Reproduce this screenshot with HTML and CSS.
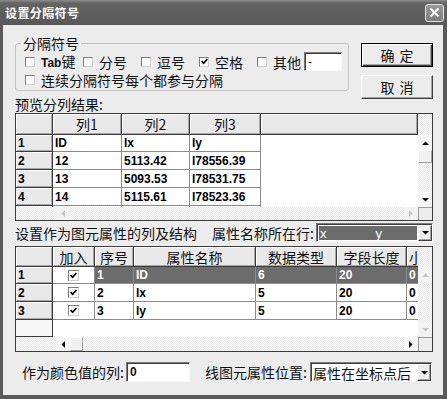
FILE: index.html
```html
<!DOCTYPE html>
<html>
<head>
<meta charset="utf-8">
<title>设置分隔符号</title>
<link rel="stylesheet" href="styles.css">
</head>
<body>
<div class="win">
  <div class="titlebar">
    <span class="title">设置分隔符号</span>
    <span class="close"><svg width="11" height="11" viewBox="0 0 11 11"><path d="M1.5 1.5L9.5 9.5M9.5 1.5L1.5 9.5" stroke="#fff" stroke-width="2"/></svg></span>
  </div>
  <div class="body">
    <div class="top">
      <div class="group">
        <span class="legend">分隔符号</span>
        <div class="grow r1">
          <span class="opt"><span class="cb"></span><span><b class="lat">Tab</b>键</span></span>
          <span class="opt"><span class="cb"></span><span>分号</span></span>
          <span class="opt"><span class="cb"></span><span>逗号</span></span>
          <span class="opt"><span class="cb"><svg class="tick" width="7" height="7" viewBox="0 0 7 7"><path d="M0.6 3.2l2 2 3.8-4.2" fill="none" stroke="#000" stroke-width="1.7"/></svg></span><span>空格</span></span>
          <span class="opt short"><span class="cb"></span><span>其他</span></span>
          <span class="field other">-</span>
        </div>
        <div class="grow r2">
          <span class="opt wide"><span class="cb"></span><span>连续分隔符号每个都参与分隔</span></span>
        </div>
      </div>
      <div class="btns">
        <div class="btn def"><span>确</span><span>定</span></div>
        <div class="btn"><span>取</span><span>消</span></div>
      </div>
      <div class="lbl">预览分列结果:</div>
    </div>

    <div class="grid g1">
      <div class="gtop">
        <div class="gview">
          <div class="gr gh">
            <div class="c rh"></div><div class="c hc">列1</div><div class="c hc">列2</div><div class="c hc">列3</div><div class="c hc"></div>
          </div>
          <div class="gr">
            <div class="c rh">1</div><div class="c d">ID</div><div class="c d">lx</div><div class="c d">ly</div><div class="c blank"></div>
          </div>
          <div class="gr">
            <div class="c rh">2</div><div class="c d">12</div><div class="c d">5113.42</div><div class="c d">l78556.39</div><div class="c blank"></div>
          </div>
          <div class="gr">
            <div class="c rh">3</div><div class="c d">13</div><div class="c d">5093.53</div><div class="c d">l78531.75</div><div class="c blank"></div>
          </div>
          <div class="gr">
            <div class="c rh">4</div><div class="c d">14</div><div class="c d">5115.61</div><div class="c d">l78523.36</div><div class="c blank"></div>
          </div>
          <div class="gr">
            <div class="c rh"></div><div class="c d"></div><div class="c d"></div><div class="c d"></div><div class="c blank"></div>
          </div>
        </div>
        <div class="vs">
          <div class="vs-head"></div>
          <div class="sb"><svg width="7" height="4" viewBox="0 0 7 4"><path d="M0 4h7L3.5 0.5z"/></svg></div>
          <div class="thumb v"></div>
          <div class="track"></div>
          <div class="sb"><svg width="7" height="4" viewBox="0 0 7 4"><path d="M0 0h7L3.5 3.5z"/></svg></div>
        </div>
      </div>
      <div class="gbot">
        <div class="hs">
          <div class="sb h dis"><svg width="4" height="7" viewBox="0 0 4 7"><path d="M4 0v7L0.5 3.5z"/></svg></div>
          <div class="track"></div>
          <div class="sb h dis"><svg width="4" height="7" viewBox="0 0 4 7"><path d="M0 0v7L3.5 3.5z"/></svg></div>
        </div>
        <div class="corner"></div>
      </div>
    </div>

    <div class="row2">
      <span class="txt">设置作为图元属性的列及结构</span>
      <span class="attr">
        <span class="txt">属性名称所在行:</span>
        <span class="combo c1">
          <span class="sel"><span>x</span><span class="ylab">y</span></span>
          <span class="dd"><svg width="7" height="4" viewBox="0 0 7 4"><path d="M0 0h7L3.5 3.5z"/></svg></span>
        </span>
      </span>
    </div>

    <div class="grid g2">
      <div class="gtop">
        <div class="gview">
          <div class="gr gh">
            <div class="c rh"></div><div class="c hc">加入</div><div class="c hc">序号</div><div class="c hc">属性名称</div><div class="c hc">数据类型</div><div class="c hc">字段长度</div><div class="c hc part">小数位数</div>
          </div>
          <div class="gr selrow">
            <div class="c rh">1</div><div class="c d ck"><span class="cb"><svg width="7" height="7" viewBox="0 0 7 7"><path d="M0.6 3.2l2 2 3.8-4.2" fill="none" stroke="#000" stroke-width="1.7"/></svg></span></div><div class="c d">1</div><div class="c d">ID</div><div class="c d">6</div><div class="c d">20</div><div class="c d">0</div>
          </div>
          <div class="gr">
            <div class="c rh">2</div><div class="c d ck"><span class="cb"><svg width="7" height="7" viewBox="0 0 7 7"><path d="M0.6 3.2l2 2 3.8-4.2" fill="none" stroke="#000" stroke-width="1.7"/></svg></span></div><div class="c d">2</div><div class="c d">lx</div><div class="c d">5</div><div class="c d">20</div><div class="c d">0</div>
          </div>
          <div class="gr">
            <div class="c rh">3</div><div class="c d ck"><span class="cb"><svg width="7" height="7" viewBox="0 0 7 7"><path d="M0.6 3.2l2 2 3.8-4.2" fill="none" stroke="#000" stroke-width="1.7"/></svg></span></div><div class="c d">3</div><div class="c d">ly</div><div class="c d">5</div><div class="c d">20</div><div class="c d">0</div>
          </div>
          <div class="gr empty">
            <div class="c rh flat"></div>
          </div>
        </div>
        <div class="vs">
          <div class="vs-head2"></div>
          <div class="sb tall dis"><svg width="7" height="4" viewBox="0 0 7 4"><path d="M0 4h7L3.5 0.5z"/></svg></div>
          <div class="track"></div>
          <div class="sb tall dis"><svg width="7" height="4" viewBox="0 0 7 4"><path d="M0 0h7L3.5 3.5z"/></svg></div>
        </div>
      </div>
      <div class="gbot b2">
        <div class="hs">
          <div class="sb h"><svg width="4" height="7" viewBox="0 0 4 7"><path d="M4 0v7L0.5 3.5z"/></svg></div>
          <div class="thumb hz"></div>
          <div class="track"></div>
          <div class="sb h"><svg width="4" height="7" viewBox="0 0 4 7"><path d="M0 0v7L3.5 3.5z"/></svg></div>
        </div>
        <div class="corner"></div>
      </div>
    </div>

    <div class="bottom">
      <span class="txt">作为颜色值的列:</span>
      <span class="field val">0</span>
      <span class="txt pos">线图元属性位置:</span>
      <span class="combo c2">
        <span class="ctext">属性在坐标点后</span>
        <span class="dd"><svg width="7" height="4" viewBox="0 0 7 4"><path d="M0 0h7L3.5 3.5z"/></svg></span>
      </span>
    </div>
  </div>
</div>
</body>
</html>
```

FILE: styles.css
```css
html, body { margin: 0; padding: 0; background: #fff; }

.win {
  width: 447px;
  height: 399px;
  display: flex;
  flex-direction: column;
  font-family: "Noto Sans CJK SC", "Liberation Sans", sans-serif;
  font-size: 14px;
  color: #111;
}

.titlebar {
  height: 25px;
  flex: none;
  display: flex;
  align-items: center;
  padding: 0 3px 0 5px;
  background: linear-gradient(#8c8c8c 0, #646464 3px, #5e5e5e 50%, #585858 100%);
}
.title {
  flex: 1;
  color: #fff;
  font-weight: bold;
  font-size: 12px;
  letter-spacing: 0.4px;
  line-height: 16px;
}
.close {
  width: 19px;
  height: 18px;
  box-sizing: border-box;
  border: 1px solid #e4e4e4;
  border-radius: 3px;
  background: linear-gradient(#9a9a9a, #7c7c7c);
  display: flex;
  align-items: center;
  justify-content: center;
}

.body {
  flex: 1;
  background: #ececec;
  border: solid #5a5a5a;
  border-width: 0 4px 4px 3px;
  padding: 18px 0 0 12px;
}

/* top section */
.top {
  display: grid;
  grid-template-columns: 334px 72px;
  column-gap: 12px;
}
.group {
  grid-column: 1;
  grid-row: 1;
  position: relative;
  height: 48px;
  box-sizing: border-box;
  border: 1px solid #c2c2c2;
  border-radius: 3px;
  padding: 8px 0 0 8px;
}
.legend {
  position: absolute;
  top: -9px;
  left: 5px;
  padding: 0 2px;
  background: #ececec;
  line-height: 16px;
}
.grow { display: flex; align-items: center; }
.r1 { height: 19px; }
.r2 { height: 16px; margin-top: 1px; }
.opt {
  display: flex;
  align-items: center;
  gap: 6px;
  width: 58px;
  flex: none;
  line-height: 16px;
  white-space: nowrap;
}
.opt.short { width: 48px; }
.opt.wide { width: auto; }
.lat { font-family: "Liberation Sans", sans-serif; font-size: 12px; }

.cb {
  width: 10px;
  height: 10px;
  box-sizing: border-box;
  border: 1px solid;
  border-color: #7c7c7c #cfcfcf #cfcfcf #7c7c7c;
  background: #fff;
  display: flex;
  align-items: center;
  justify-content: center;
  flex: none;
  margin-left: 1px;
}

.field {
  box-sizing: border-box;
  border: 1px solid;
  border-color: #7a7a7a #f8f8f8 #f8f8f8 #7a7a7a;
  box-shadow: inset 1px 1px #3e3e3e;
  background: #fff;
  font-family: "Liberation Sans", sans-serif;
  display: flex;
  align-items: center;
  padding-left: 3px;
}
.other { width: 38px; height: 19px; font-size: 12px; }

.btns {
  grid-column: 2;
  grid-row: 1 / 3;
  display: flex;
  flex-direction: column;
  gap: 8px;
}
.btn {
  width: 72px;
  height: 24px;
  box-sizing: border-box;
  display: flex;
  align-items: center;
  justify-content: center;
  gap: 5px;
  background: #ececec;
  border: 1px solid;
  border-color: #fff #404040 #404040 #fff;
  box-shadow: inset -1px -1px #a4a4a4;
  line-height: 16px;
}
.btn.def {
  border-color: #000;
  box-shadow: inset 1px 1px #fff, inset -1px -1px #404040, inset -2px -2px #a4a4a4;
}

.lbl {
  grid-column: 1;
  grid-row: 2;
  margin-top: 5px;
  line-height: 16px;
}

/* grids */
.grid {
  width: 418px;
  box-sizing: border-box;
  border: 1px solid #3c3c3c;
  background: #fff;
  font-family: "Liberation Sans", sans-serif;
  font-size: 12px;
  font-weight: bold;
  color: #000;
}
.g1 { margin-top: 1px; }
.g2 { margin-top: 4px; }
.gtop { display: flex; }
.gview { width: 402px; overflow: hidden; flex: none; }
.g1 .gview { height: 93px; }
.g2 .gview { height: 90px; }

.gr { display: grid; height: 18px; }
.g1 .gr { grid-template-columns: 37px 69px 68px 71px 157px; }
.g2 .gr { grid-template-columns: 37px 42px 39px 122px 81px 70px 60px; }
.g1 .gh { height: 21px; }
.g1 .gr:nth-child(2) { height: 17px; }
.g2 .gh { height: 20px; }
.g2 .gr:nth-child(2) { height: 17px; }
.g2 .empty { height: 17px; }

.c {
  box-sizing: border-box;
  display: flex;
  align-items: center;
  overflow: hidden;
  white-space: nowrap;
}
.rh {
  background: #e9e9e9;
  border-right: 1px solid #3c3c3c;
  border-bottom: 1px solid #3c3c3c;
  box-shadow: inset 1px 1px #fff, inset -1px -1px #a8a8a8;
  padding-left: 2px;
}
.rh.flat { background: #f6f6f6; box-shadow: none; }
.hc {
  background: #e9e9e9;
  border-right: 1px solid #3c3c3c;
  border-bottom: 1px solid #3c3c3c;
  box-shadow: inset 1px 1px #fff, inset -1px -1px #a8a8a8;
  justify-content: center;
  font-family: "Noto Sans CJK SC", sans-serif;
  font-weight: normal;
  font-size: 14px;
  color: #111;
}
.hc.part { justify-content: flex-start; padding-left: 2px; }
.d {
  border-right: 1px solid #8a8a8a;
  border-bottom: 1px solid #8a8a8a;
  padding-left: 2px;
  background: #fff;
}
.ck { justify-content: center; padding-left: 0; }
.ck .cb { width: 11px; height: 11px; margin-left: 0; }
.blank { background: #fff; }
.selrow .d:not(.ck) {
  background: #6c6c6c;
  color: #fff;
  border-color: #8e8e8e;
}

.track {
  flex: 1;
  background: repeating-conic-gradient(#fbfbfb 0 25%, #e6e6e6 0 50%) 0 0 / 2px 2px;
}
.vs {
  width: 14px;
  display: flex;
  flex-direction: column;
  background: repeating-conic-gradient(#fbfbfb 0 25%, #e6e6e6 0 50%) 0 0 / 2px 2px;
}
.vs-head { height: 21px; flex: none; }
.vs-head2 { height: 20px; flex: none; }
.sb {
  height: 15px;
  flex: none;
  background: #f6f6f6;
  display: flex;
  align-items: center;
  justify-content: center;
}
.sb.tall { height: 15px; }
.sb.h { width: 14px; height: auto; }
.sb.dis path { fill: #c4c4c4; }
.sb.dis { background: #f2f2f2; }
.thumb {
  flex: none;
  box-sizing: border-box;
  background: #f0f0f0;
  border: 1px solid;
  border-color: #fff #a0a0a0 #a0a0a0 #fff;
}
.thumb.v { height: 13px; }
.thumb.hz { width: 13px; }

.gbot { display: flex; height: 13px; }
.gbot.b2 { height: 14px; }
.hs {
  width: 402px;
  display: flex;
  padding-left: 40px;
  box-sizing: border-box;
  background: repeating-conic-gradient(#fbfbfb 0 25%, #e6e6e6 0 50%) 0 0 / 2px 2px;
}
.corner {
  width: 14px;
  box-sizing: border-box;
  background: #ededed;
  border-left: 1px solid #9a9a9a;
  border-top: 1px solid #9a9a9a;
}

/* attribute row */
.row2 {
  width: 418px;
  height: 19px;
  margin-top: 2px;
  display: flex;
  align-items: center;
}
.txt { line-height: 16px; white-space: nowrap; }
.attr { margin-left: auto; display: flex; align-items: center; gap: 2px; }
.combo {
  box-sizing: border-box;
  height: 19px;
  display: flex;
  align-items: stretch;
  border: 1px solid;
  border-color: #7a7a7a #f8f8f8 #f8f8f8 #7a7a7a;
  box-shadow: inset 1px 1px #3e3e3e;
  background: #fff;
  padding: 1px 0 0 1px;
}
.c1 { width: 117px; }
.sel {
  flex: 1;
  margin: 1px;
  background: #6c6c6c;
  color: #fff;
  font-family: "Liberation Sans", sans-serif;
  font-size: 13px;
  display: flex;
  align-items: center;
  padding-left: 1px;
}
.ylab { margin-left: 49px; }
.dd {
  width: 14px;
  flex: none;
  box-sizing: border-box;
  background: #ececec;
  border: 1px solid;
  border-color: #fff #404040 #404040 #fff;
  box-shadow: inset -1px -1px #a4a4a4;
  display: flex;
  align-items: center;
  justify-content: center;
}

/* bottom row */
.bottom {
  width: 417px;
  height: 20px;
  margin-top: 10px;
  padding-left: 7px;
  box-sizing: border-box;
  display: flex;
  align-items: center;
  gap: 2px;
}
.val { width: 64px; height: 20px; font-size: 12px; font-weight: bold; }
.pos { margin-left: auto; margin-right: 1px; }
.c2 { width: 122px; height: 20px; }
.ctext { flex: 1; line-height: 16px; padding-left: 1px; display: flex; align-items: center; }
```
